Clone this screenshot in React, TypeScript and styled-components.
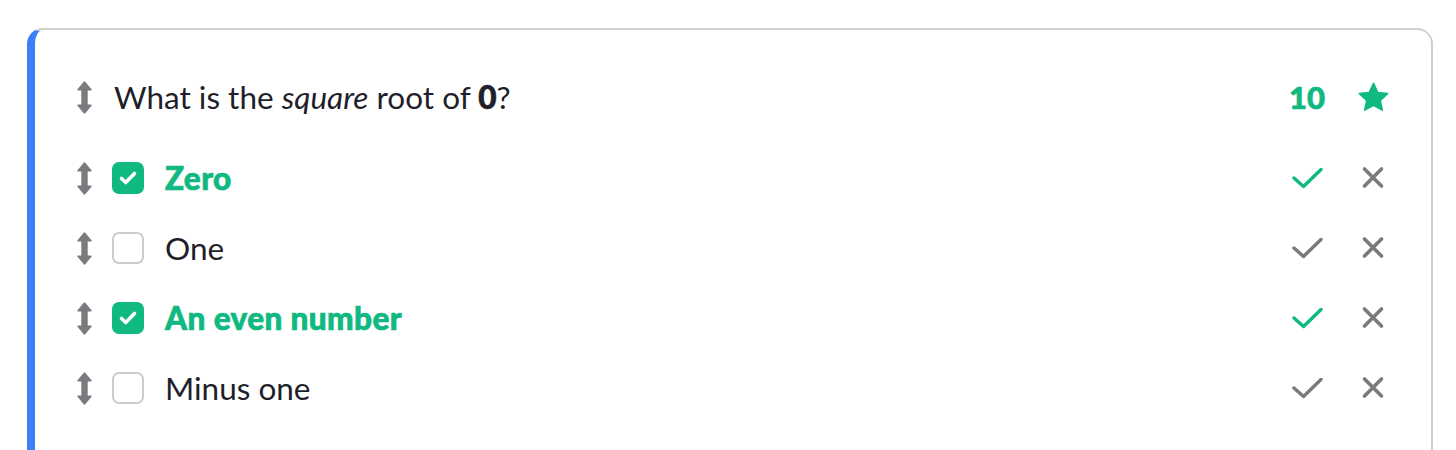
import React from "react";
import styled, { createGlobalStyle, css } from "styled-components";

const GlobalStyle = createGlobalStyle`
  html, body {
    margin: 0;
    padding: 0;
    background: #ffffff;
  }
  body {
    font-family: Lato, "Noto Sans", sans-serif;
    -webkit-font-smoothing: antialiased;
  }
`;

const heavy = css`
  font-weight: 900;
  -webkit-text-stroke: 0.7px currentColor;
`;

const Page = styled.div`
  padding: 28px 23px 0 27px;
`;

const Card = styled.div`
  box-sizing: border-box;
  border: 2px solid #cfcfcf;
  border-left: 8px solid #3b80f6;
  border-radius: 16px;
  background: #ffffff;
  padding: 32px 34px 40px 0;
`;

const Row = styled.div`
  display: flex;
  align-items: center;
  height: 70px;
  padding-left: 42px;
`;

const Options = styled.div`
  margin-top: 11px;
  display: flex;
  flex-direction: column;
`;

const Handle = styled.svg`
  width: 15px;
  height: 33px;
  flex: none;
  color: #7b7b7f;
`;

const QuestionText = styled.div`
  margin-left: 22px;
  font-size: 31.5px;
  color: #1f1f2b;
  flex: 1;
  em {
    font-style: italic;
  }
  strong {
    ${heavy}
  }
`;

const Box = styled.div<{ $checked: boolean }>`
  box-sizing: border-box;
  width: 32px;
  height: 32px;
  flex: none;
  margin-left: 20px;
  border-radius: 7px;
  border: 2px solid ${(p) => (p.$checked ? "#10b981" : "#cccccc")};
  background: ${(p) => (p.$checked ? "#10b981" : "#ffffff")};
  display: flex;
  align-items: center;
  justify-content: center;
`;

const OptionText = styled.div<{ $checked: boolean }>`
  margin-left: 21px;
  flex: 1;
  font-size: 31.5px;
  color: ${(p) => (p.$checked ? "#10b981" : "#1f1f2b")};
  ${(p) =>
    p.$checked
      ? css`
          ${heavy}
          letter-spacing: 0.4px;
        `
      : css`
          font-weight: 400;
        `}
`;

const Cell = styled.div`
  width: 48px;
  flex: none;
  display: flex;
  align-items: center;
  justify-content: center;
`;

const Cells = styled.div`
  display: flex;
  gap: 18px;
  flex: none;
`;

const Points = styled.span`
  font-size: 31px;
  ${heavy}
  color: #10b981;
`;

const IconSvg = styled.svg<{ $color: string }>`
  color: ${(p) => p.$color};
  display: block;
`;

const GREEN = "#10b981";
const GREY = "#7a7a7e";

function DragHandle() {
  return (
    <Handle viewBox="0 0 15 33">
      <polygon
        points="7.5,1 14,8.8 10,8.8 10,24.2 14,24.2 7.5,32 1,24.2 5,24.2 5,8.8 1,8.8"
        fill="currentColor"
        stroke="currentColor"
        strokeWidth="1.4"
        strokeLinejoin="round"
      />
    </Handle>
  );
}

function Star() {
  return (
    <IconSvg $color={GREEN} width="35" height="33" viewBox="0 0 24 24">
      <path
        d="M12 1.8l3.1 6.6 7.1.8-5.3 4.9 1.5 7.1L12 17.6l-6.4 3.6 1.5-7.1-5.3-4.9 7.1-.8z"
        fill="currentColor"
        stroke="currentColor"
        strokeWidth="1.2"
        strokeLinejoin="round"
      />
    </IconSvg>
  );
}

function Check({ color }: { color: string }) {
  return (
    <IconSvg $color={color} width="32" height="24" viewBox="0 0 32 24">
      <path
        d="M3 12l9.5 8.5L30 3.5"
        fill="none"
        stroke="currentColor"
        strokeWidth="3.4"
        strokeLinecap="round"
        strokeLinejoin="round"
      />
    </IconSvg>
  );
}

function Cross() {
  return (
    <IconSvg $color={GREY} width="24" height="24" viewBox="0 0 24 24">
      <path
        d="M3.5 3l17 17M20.5 3l-17 17"
        fill="none"
        stroke="currentColor"
        strokeWidth="3.6"
        strokeLinecap="round"
      />
    </IconSvg>
  );
}

function BoxCheck() {
  return (
    <svg width="20" height="16" viewBox="0 0 20 16">
      <path
        d="M3.5 8.5l4.2 4L16.5 3.5"
        fill="none"
        stroke="#ffffff"
        strokeWidth="3.6"
        strokeLinecap="round"
        strokeLinejoin="round"
      />
    </svg>
  );
}

const options = [
  { label: "Zero", checked: true },
  { label: "One", checked: false },
  { label: "An even number", checked: true },
  { label: "Minus one", checked: false },
];

export default function App() {
  return (
    <>
      <GlobalStyle />
      <Page>
        <Card>
          <Row>
            <DragHandle />
            <QuestionText>
              What is the <em>square</em> root of <strong>0</strong>?
            </QuestionText>
            <Cells>
              <Cell>
                <Points>10</Points>
              </Cell>
              <Cell>
                <Star />
              </Cell>
            </Cells>
          </Row>
          <Options>
            {options.map((o) => (
              <Row key={o.label}>
                <DragHandle />
                <Box $checked={o.checked}>{o.checked && <BoxCheck />}</Box>
                <OptionText $checked={o.checked}>{o.label}</OptionText>
                <Cells>
                  <Cell>
                    <Check color={o.checked ? GREEN : GREY} />
                  </Cell>
                  <Cell>
                    <Cross />
                  </Cell>
                </Cells>
              </Row>
            ))}
          </Options>
        </Card>
      </Page>
    </>
  );
}
